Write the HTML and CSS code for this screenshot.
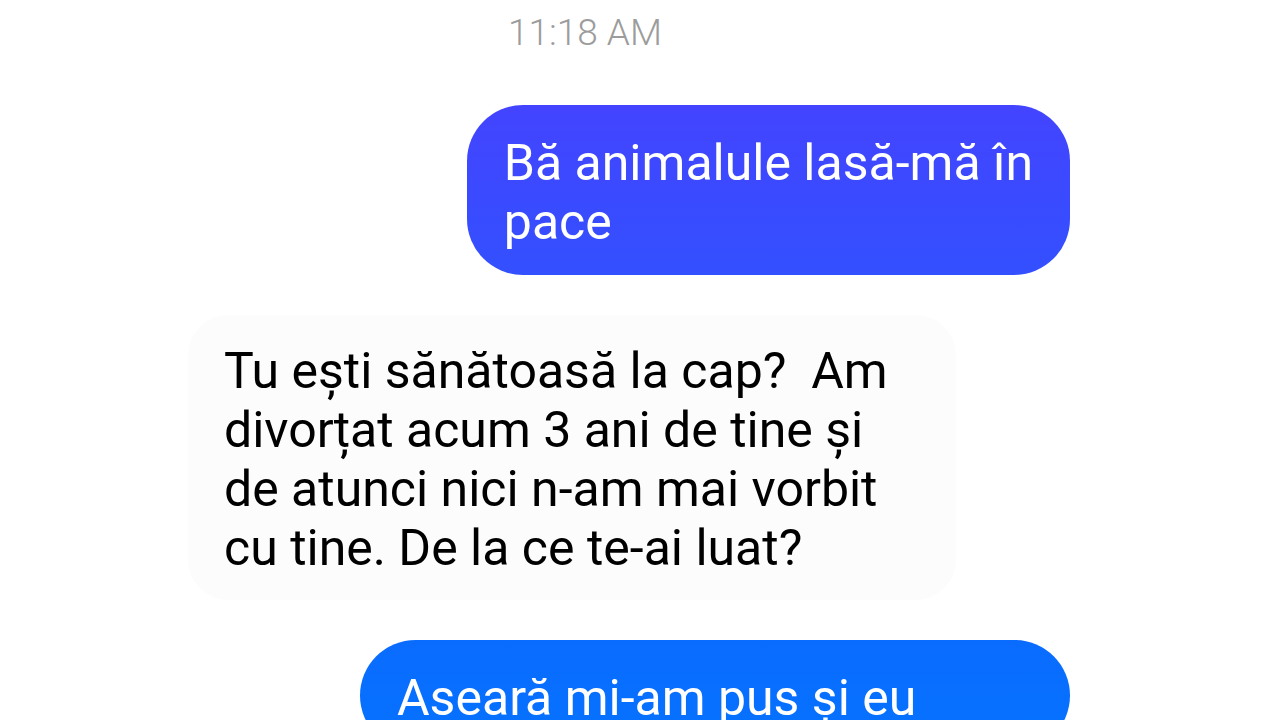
FILE: index.html
```html
<!DOCTYPE html>
<html lang="ro">
<head>
  <meta charset="UTF-8">
  <meta name="viewport" content="width=device-width, initial-scale=1">
  <title>Chat</title>
  <link rel="stylesheet" href="styles.css">
</head>
<body>
<main class="chat">
  <time class="time">11:18 AM</time>
  <p class="msg sent first">Bă animalule lasă-mă în<br>pace</p>
  <p class="msg received">Tu ești sănătoasă la cap?&nbsp; Am<br>divorțat acum 3 ani de tine și<br>de atunci nici n-am mai vorbit<br>cu tine. De la ce te-ai luat?</p>
  <p class="msg sent last">Aseară mi-am pus și eu</p>
</main>
</body>
</html>
```

FILE: styles.css
```css
* {
  box-sizing: border-box;
  margin: 0;
  padding: 0;
}

body {
  background: #fff;
  font-family: Roboto, "Noto Sans", sans-serif;
  overflow: hidden;
}

.chat {
  display: flex;
  flex-direction: column;
  gap: 40px;
  height: 100vh;
  padding: 9px 210px 0 188px;
  overflow: hidden;
}

.time {
  align-self: center;
  margin-bottom: 8px;
  padding-right: 88px;
  font-size: 37px;
  font-weight: 300;
  line-height: 48px;
  color: #9c9c9c;
}

.msg {
  flex: none;
  font-size: 50px;
  line-height: 59px;
}

.sent {
  align-self: flex-end;
  padding: 29px 37px 23px;
  border-radius: 56px;
  color: #fff;
}

.first {
  background: linear-gradient(#4344ff, #3350ff);
}

.received {
  align-self: flex-start;
  min-width: 768px;
  padding: 27px 36px 22px;
  border-radius: 40px;
  background: #fcfcfc;
  color: #000;
}

.last {
  min-width: 710px;
  background: linear-gradient(#0a6cff, #0572ff);
}
```
